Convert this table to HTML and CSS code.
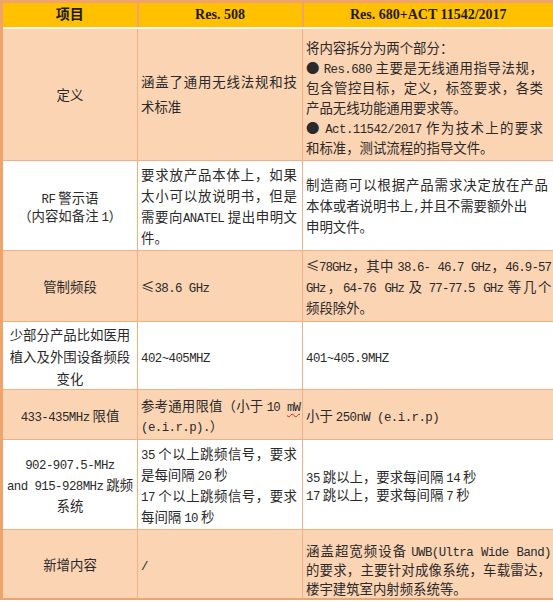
FILE: index.html
```html
<!DOCTYPE html>
<html lang="zh-CN">
<head>
<meta charset="utf-8">
<title>Res. 508 vs Res. 680</title>
<link rel="stylesheet" href="styles.css">
</head>
<body>
<table class="cmp">
  <colgroup><col class="c1"><col class="c2"><col class="c3"></colgroup>
  <thead>
    <tr class="hd"><th>项目</th><th>Res. 508</th><th>Res. 680+ACT 11542/2017</th></tr>
  </thead>
  <tbody>
    <tr class="r1 peach">
      <td class="name">定义</td>
      <td class="tx lh25"><span class="ln j">涵盖了通用无线法规和技</span><span class="ln">术标准</span></td>
      <td class="tx lh20 pr10 down">
        <span class="ln">将内容拆分为两个部分：</span>
        <span class="ln j">● <span class="en">Res.680</span> 主要是无线通用指导法规，</span>
        <span class="ln j">包含管控目标，定义，标签要求，各类</span>
        <span class="ln">产品无线功能通用要求等。</span>
        <span class="ln j">● <span class="en">Act.11542/2017</span> 作为技术上的要求</span>
        <span class="ln">和标准，测试流程的指导文件。</span>
      </td>
    </tr>
    <tr class="r2">
      <td class="name lh18"><span class="ln"><span class="en">RF</span> 警示语</span><span class="ln">（内容如备注 <span class="en">1</span>）</span></td>
      <td class="tx lh21">
        <span class="ln j">要求放产品本体上，如果</span>
        <span class="ln j">太小可以放说明书，但是</span>
        <span class="ln j">需要向<span class="en">ANATEL</span> 提出申明文</span>
        <span class="ln">件。</span>
      </td>
      <td class="tx lh21">
        <span class="ln j">制造商可以根据产品需求决定放在产品</span>
        <span class="ln">本体或者说明书上<span class="en">,</span>并且不需要额外出</span>
        <span class="ln">申明文件。</span>
      </td>
    </tr>
    <tr class="r3 peach">
      <td class="name">管制频段</td>
      <td class="tx">≤<span class="en">38.6 GHz</span></td>
      <td class="tx lh21 pr2">
        <span class="ln j tight">≤<span class="en">78GHz</span>，其中 <span class="en">38.6- 46.7 GHz</span>，<span class="en">46.9-57</span></span>
        <span class="ln j tight"><span class="en">GHz</span>，<span class="en">64-76 GHz</span> 及 <span class="en">77-77.5 GHz</span> 等几个</span>
        <span class="ln">频段除外。</span>
      </td>
    </tr>
    <tr class="r4">
      <td class="name lh22"><span class="ln">少部分产品比如医用</span><span class="ln">植入及外围设备频段</span><span class="ln">变化</span></td>
      <td class="tx"><span class="en">402~405MHZ</span></td>
      <td class="tx"><span class="en">401~405.9MHZ</span></td>
    </tr>
    <tr class="r5 peach">
      <td class="name"><span class="en">433-435MHz</span> 限值</td>
      <td class="tx lh20 pr2">
        <span class="ln j tight">参考通用限值（小于 <span class="en">10 <span class="typo">mW</span></span></span>
        <span class="ln"><span class="en">(e.i.r.p).</span>）</span>
      </td>
      <td class="tx">小于 <span class="en">250nW (e.i.r.p)</span></td>
    </tr>
    <tr class="r6">
      <td class="name lh21"><span class="ln"><span class="en">902-907.5-MHz</span></span><span class="ln"><span class="en">and 915-928MHz</span> 跳频</span><span class="ln">系统</span></td>
      <td class="tx lh21">
        <span class="ln j"><span class="en">35</span> 个以上跳频信号，要求</span>
        <span class="ln">是每间隔 <span class="en">20</span> 秒</span>
        <span class="ln j"><span class="en">17</span> 个以上跳频信号，要求</span>
        <span class="ln">每间隔 <span class="en">10</span> 秒</span>
      </td>
      <td class="tx lh18">
        <span class="ln"><span class="en">35</span> 跳以上，要求每间隔 <span class="en">14</span> 秒</span>
        <span class="ln"><span class="en">17</span> 跳以上，要求每间隔 <span class="en">7</span> 秒</span>
      </td>
    </tr>
    <tr class="r7 peach">
      <td class="name">新增内容</td>
      <td class="tx"><span class="en">/</span></td>
      <td class="tx lh19 bot">
        <span class="ln j">涵盖超宽频设备 <span class="en">UWB(Ultra Wide Band)</span></span>
        <span class="ln j">的要求，主要针对成像系统，车载雷达，</span>
        <span class="ln">楼宇建筑室内射频系统等。</span>
      </td>
    </tr>
  </tbody>
</table>
</body>
</html>
```
FILE: styles.css
```css
body {
  margin: 0;
  background: #ffffff;
}

.cmp {
  border-collapse: collapse;
  table-layout: fixed;
  width: 553px;
  border: 3px solid #efa46c;
  border-bottom-width: 2px;
  font-family: "Noto Sans CJK SC", sans-serif;
  font-size: 13.4px;
  line-height: 20px;
  color: #2a2a2a;
}

.c1 { width: 136px; }
.c2 { width: 165px; }
.c3 { width: 252px; }

.cmp td,
.cmp th {
  border: 1px solid #f4b083;
  padding: 0 5px 0 3px;
  vertical-align: middle;
  text-align: left;
}

.hd { height: 26px; }

.hd th {
  background: #ffc000;
  border-left: 2px solid #efa46c;
  border-right: 2px solid #efa46c;
  border-bottom: 2px solid #fff6ea;
  font-family: "Liberation Serif", "Noto Sans CJK SC", serif;
  font-weight: bold;
  font-size: 14px;
  line-height: 22px;
  color: #1e1a10;
  text-align: center;
  padding: 0;
}

.peach td { background: #fbd4b4; }

.r1 { height: 133px; }
.r2 { height: 90px; }
.r3 { height: 71px; }
.r4 { height: 68px; }
.r5 { height: 50px; }
.r6 { height: 90px; }
.r7 { height: 69px; }

.cmp td.name {
  text-align: center;
  padding: 0 1px;
}

.cmp td.pr10 { padding-right: 10px; }
.cmp td.pr2 { padding-right: 2px; }
.cmp td.down { padding-top: 6px; }
.cmp td.bot { vertical-align: bottom; padding-right: 2px; }

.ln { display: block; }
.j { text-align: justify; text-align-last: justify; }
.tight { letter-spacing: -0.45px; }

.lh18 { line-height: 18px; }
.lh19 { line-height: 19px; }
.lh20 { line-height: 20px; }
.lh21 { line-height: 21px; }
.lh22 { line-height: 22px; }
.lh25 { line-height: 25px; }

.en {
  font-family: "Liberation Mono", monospace;
  font-size: 12.4px;
  letter-spacing: -0.55px;
  line-height: 0;
}

.tight .en { letter-spacing: -0.9px; }

.typo {
  text-decoration: underline wavy #e02020;
  text-decoration-thickness: 1px;
  text-underline-offset: 2px;
}
```
